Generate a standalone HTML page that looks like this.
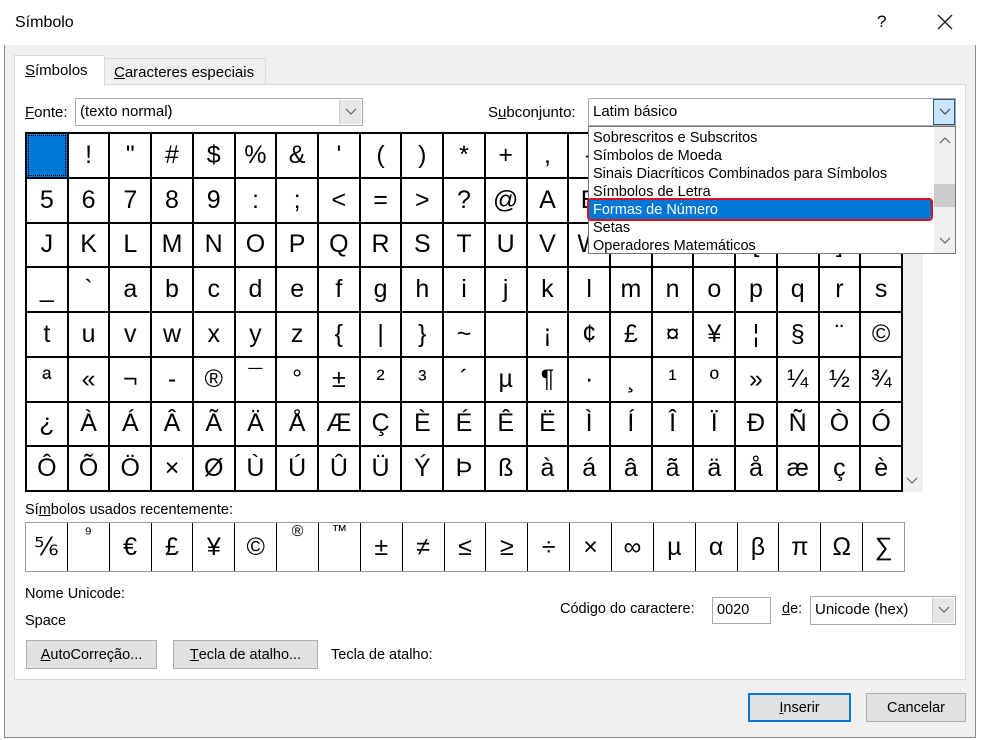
<!DOCTYPE html>
<html><head><meta charset="utf-8"><style>
*{box-sizing:border-box;margin:0;padding:0}
body{width:984px;height:740px;background:#fff;font-family:"Liberation Sans",sans-serif;font-size:14.5px;color:#000;position:relative;overflow:hidden}
.a{position:absolute}
#dlg{left:4px;top:2px;width:972px;height:736px;border:1px solid #8a8a8a;background:#f0f0f0}
#title{left:4px;top:2px;width:972px;height:43px;background:#fff}
#panel{left:14px;top:84px;width:952px;height:596px;background:#fff;border:1px solid #d9d9d9}
.g{display:grid;background:#000;gap:2px;border:2px solid #000}
.g div{background:#fff;display:flex;align-items:center;justify-content:center;font-size:25px;font-family:"Liberation Sans","DejaVu Sans",sans-serif}
.combo{border:1px solid #aaa;background:#fff;height:28px;padding:4px 4px;font-size:15px}
.btn{background:#e1e1e1;border:1px solid #adadad;height:29px;display:flex;align-items:center;justify-content:center;font-size:14.5px}
.arr{position:absolute;right:1px;top:1px;width:22px;height:24px;background:#e6e6e6;border-left:1px solid #ccc}
.arr svg{position:absolute;left:5px;top:8px}
</style></head><body>
<div class="a" id="dlg"></div>
<div class="a" id="title"></div>
<div class="a" style="left:15px;top:14px;font-size:16px">Símbolo</div>
<div class="a" style="left:877px;top:12px;font-size:17px">?</div>
<svg class="a" style="left:937px;top:14px" width="16" height="16"><path d="M1 1L15 15M15 1L1 15" stroke="#222" stroke-width="1.4"/></svg>
<div class="a" id="panel"></div>
<div class="a" style="left:104px;top:58px;width:162px;height:27px;background:#f0f0f0;border:1px solid #d9d9d9;padding:5px 9px;font-size:15px"><u>C</u>aracteres especiais</div>
<div class="a" style="left:14px;top:55px;width:91px;height:31px;background:#fff;border:1px solid #d9d9d9;border-bottom:none;padding:6px 10px;font-size:15px"><u>S</u>ímbolos</div>
<div class="a" style="left:25px;top:104px;font-size:15px"><u>F</u>onte:</div>
<div class="a combo" style="left:75px;top:98px;width:288px">(texto normal)<div class="arr"><svg width="12" height="8"><path d="M1 1L6 6L11 1" stroke="#555" fill="none"/></svg></div></div>
<div class="a" style="left:488px;top:104px;font-size:15px">S<u>u</u>bconjunto:</div>

<div class="a g" style="left:25px;top:132px;width:878px;height:360px;grid-template-columns:repeat(21,1fr);grid-template-rows:repeat(8,1fr)">
<div style="background:#0078d7;outline:1px dotted #000;outline-offset:-2px"></div><div>!</div><div>"</div><div>#</div><div>$</div><div>%</div><div>&amp;</div><div>'</div><div>(</div><div>)</div><div>*</div><div>+</div><div>,</div><div>-</div><div>.</div><div>/</div><div>0</div><div>1</div><div>2</div><div>3</div><div>4</div>
<div>5</div><div>6</div><div>7</div><div>8</div><div>9</div><div>:</div><div>;</div><div>&lt;</div><div>=</div><div>&gt;</div><div>?</div><div>@</div><div>A</div><div>B</div><div>C</div><div>D</div><div>E</div><div>F</div><div>G</div><div>H</div><div>I</div>
<div>J</div><div>K</div><div>L</div><div>M</div><div>N</div><div>O</div><div>P</div><div>Q</div><div>R</div><div>S</div><div>T</div><div>U</div><div>V</div><div>W</div><div>X</div><div>Y</div><div>Z</div><div>[</div><div>\</div><div>]</div><div>^</div>
<div>_</div><div>`</div><div>a</div><div>b</div><div>c</div><div>d</div><div>e</div><div>f</div><div>g</div><div>h</div><div>i</div><div>j</div><div>k</div><div>l</div><div>m</div><div>n</div><div>o</div><div>p</div><div>q</div><div>r</div><div>s</div>
<div>t</div><div>u</div><div>v</div><div>w</div><div>x</div><div>y</div><div>z</div><div>{</div><div>|</div><div>}</div><div>~</div><div></div><div>¡</div><div>¢</div><div>£</div><div>¤</div><div>¥</div><div>¦</div><div>§</div><div>¨</div><div>©</div>
<div>ª</div><div>«</div><div>¬</div><div>-</div><div>®</div><div>¯</div><div>°</div><div>±</div><div>²</div><div>³</div><div>´</div><div>µ</div><div>¶</div><div>·</div><div>¸</div><div>¹</div><div>º</div><div>»</div><div>¼</div><div>½</div><div>¾</div>
<div>¿</div><div>À</div><div>Á</div><div>Â</div><div>Ã</div><div>Ä</div><div>Å</div><div>Æ</div><div>Ç</div><div>È</div><div>É</div><div>Ê</div><div>Ë</div><div>Ì</div><div>Í</div><div>Î</div><div>Ï</div><div>Ð</div><div>Ñ</div><div>Ò</div><div>Ó</div>
<div>Ô</div><div>Õ</div><div>Ö</div><div>×</div><div>Ø</div><div>Ù</div><div>Ú</div><div>Û</div><div>Ü</div><div>Ý</div><div>Þ</div><div>ß</div><div>à</div><div>á</div><div>â</div><div>ã</div><div>ä</div><div>å</div><div>æ</div><div>ç</div><div>è</div>
</div>
<div class="a" style="left:903px;top:132px;width:20px;height:360px;background:#f0f0f0"></div>
<svg class="a" style="left:906px;top:477px" width="12" height="8"><path d="M1 1L6 6L11 1" stroke="#555" fill="none"/></svg>

<div class="a combo" style="left:588px;top:98px;width:368px">Latim básico<div class="arr" style="background:#cce4f7;border:1px solid #2a5a8a;top:0;right:0;height:26px"><svg width="12" height="8"><path d="M1 1L6 6L11 1" stroke="#333" fill="none"/></svg></div></div>
<div class="a" style="left:588px;top:126px;width:368px;height:128px;background:#fff;border:1px solid #777;font-size:14.5px;line-height:18px;padding-left:4px;padding-top:2px">
<div>Sobrescritos e Subscritos</div><div>Símbolos de Moeda</div><div>Sinais Diacríticos Combinados para Símbolos</div><div>Símbolos de Letra</div><div style="color:#fff">Formas de Número</div><div>Setas</div><div>Operadores Matemáticos</div>
</div>
<div class="a" style="left:587px;top:198px;width:346px;height:23px;background:#0078d7;border:2px solid #e0101a;border-radius:4px;color:#fff;font-size:14.5px;padding:1px 4px;line-height:18px">Formas de Número</div>
<div class="a" style="left:934px;top:127px;width:21px;height:126px;background:#f0f0f0"></div>
<div class="a" style="left:934px;top:184px;width:21px;height:23px;background:#cdcdcd"></div>
<svg class="a" style="left:939px;top:136px" width="12" height="8"><path d="M1 7L6 2L11 7" stroke="#555" fill="none"/></svg>
<svg class="a" style="left:939px;top:237px" width="12" height="8"><path d="M1 1L6 6L11 1" stroke="#555" fill="none"/></svg>

<div class="a" style="left:25px;top:502px;font-size:14.5px">Sí<u>m</u>bolos usados recentemente:</div>
<div class="a g" style="left:25px;top:522px;width:880px;height:50px;grid-template-columns:repeat(21,1fr);gap:1px;background:#000;border:1px solid #999">
<div>⅚</div><div style="align-items:flex-start;font-size:18px">⁹</div><div>€</div><div>£</div><div>¥</div><div>©</div><div style="align-items:flex-start;font-size:16px">®</div><div style="align-items:flex-start;font-size:16px">™</div><div>±</div><div>≠</div><div>≤</div><div>≥</div><div>÷</div><div>×</div><div>∞</div><div>µ</div><div>α</div><div>β</div><div>π</div><div>Ω</div><div>∑</div>
</div>
<div class="a" style="left:25px;top:586px">Nome Unicode:</div>
<div class="a" style="left:25px;top:613px">Space</div>
<div class="a" style="left:560px;top:601px">Código do caractere:</div>
<div class="a" style="left:712px;top:597px;width:59px;height:27px;background:#fff;border:1px solid #aaa;padding:4px 4px">0020</div>
<div class="a" style="left:782px;top:601px"><u>d</u>e:</div>
<div class="a combo" style="left:810px;top:596px;width:146px;height:29px">Unicode (hex)<div class="arr" style="height:25px"><svg width="12" height="8"><path d="M1 1L6 6L11 1" stroke="#555" fill="none"/></svg></div></div>
<div class="a btn" style="left:26px;top:640px;width:131px"><u>A</u>utoCorreção...</div>
<div class="a btn" style="left:173px;top:640px;width:145px"><u>T</u>ecla de atalho...</div>
<div class="a" style="left:331px;top:647px">Tecla de atalho:</div>
<div class="a btn" style="left:748px;top:693px;width:103px;border:2px solid #0078d7"><u>I</u>nserir</div>
<div class="a btn" style="left:866px;top:693px;width:100px">Cancelar</div>
</body></html>
